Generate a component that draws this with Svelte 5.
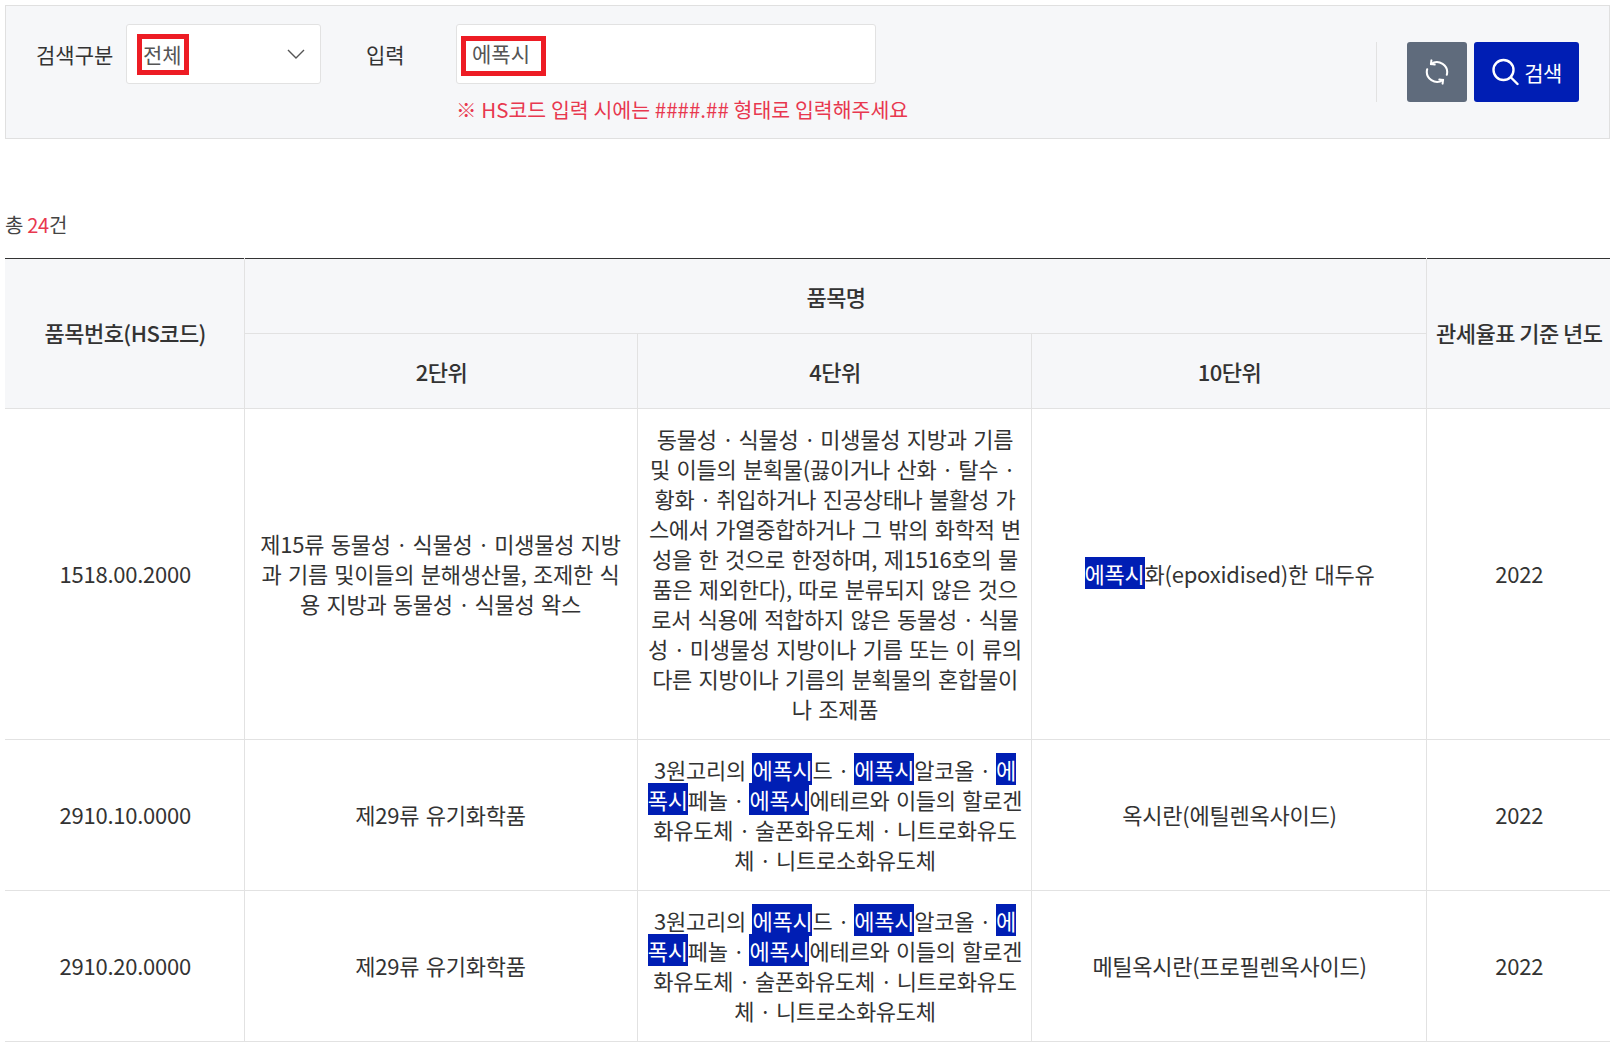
<script>
  const kw = '에폭시';
  const desc29 = [
    '3원고리의 ', { k: kw }, '드ㆍ', { k: kw }, '알코올ㆍ', { k: kw }, '페놀ㆍ', { k: kw },
    '에테르와 이들의 할로겐화유도체ㆍ술폰화유도체ㆍ니트로화유도체ㆍ니트로소화유도체'
  ];

  const rows = [
    {
      code: '1518.00.2000',
      two: ['제15류 동물성ㆍ식물성ㆍ미생물성 지방과 기름 및이들의 분해생산물, 조제한 식용 지방과 동물성ㆍ식물성 왁스'],
      four: ['동물성ㆍ식물성ㆍ미생물성 지방과 기름 및 이들의 분획물(끓이거나 산화ㆍ탈수ㆍ황화ㆍ취입하거나 진공상태나 불활성 가스에서 가열중합하거나 그 밖의 화학적 변성을 한 것으로 한정하며, 제1516호의 물품은 제외한다), 따로 분류되지 않은 것으로서 식용에 적합하지 않은 동물성ㆍ식물성ㆍ미생물성 지방이나 기름 또는 이 류의 다른 지방이나 기름의 분획물의 혼합물이나 조제품'],
      ten: [{ k: kw }, '화(epoxidised)한 대두유']
    },
    { code: '2910.10.0000', two: ['제29류 유기화학품'], four: desc29, ten: ['옥시란(에틸렌옥사이드)'] },
    { code: '2910.20.0000', two: ['제29류 유기화학품'], four: desc29, ten: ['메틸옥시란(프로필렌옥사이드)'] }
  ];
</script>

{#snippet rich(parts)}
  {#each parts as p}{#if typeof p === 'string'}{#each p.split('ㆍ') as seg, i}{#if i}<span class="dot">ㆍ</span>{/if}{seg}{/each}{:else}<span class="hit">{p.k}</span>{/if}{/each}
{/snippet}

<div class="page">
  <div class="search">
    <span class="lbl lbl-type">검색구분</span>
    <div class="field select">
      <span class="mark mark-sel">전체</span>
      <svg class="chev" width="20" height="12" viewBox="0 0 20 12"><path d="M2 2l8 8 8-8" fill="none" stroke="#555" stroke-width="1.4"/></svg>
    </div>
    <span class="lbl lbl-input">입력</span>
    <div class="input-wrap">
      <div class="field text">
        <span class="mark mark-inp">에폭시</span>
      </div>
      <p class="hint">※ HS코드 입력 시에는 ####.## 형태로 입력해주세요</p>
    </div>
    <div class="actions">
      <button class="btn reset" aria-label="초기화">
        <svg width="26" height="26" viewBox="0 0 28 28" fill="none" stroke="#fff" stroke-width="2.2" stroke-linecap="round" stroke-linejoin="round">
          <path d="M7.5 5.5A11 11 0 0 1 24.6 17"/>
          <path d="M20.5 22.5A11 11 0 0 1 3.4 11"/>
          <path d="M8 1.5l-.5 4 4 .5"/>
          <path d="M20 26.5l.5-4-4-.5"/>
        </svg>
      </button>
      <button class="btn go">
        <svg width="28" height="28" viewBox="0 0 28 28" fill="none" stroke="#fff" stroke-width="2.4" stroke-linecap="round">
          <circle cx="12.5" cy="12" r="10"/>
          <path d="M20 19.5l6.5 6.5"/>
        </svg>
        검색
      </button>
    </div>
  </div>

  <p class="total">총 <b>24</b>건</p>

  <table>
    <colgroup>
      <col style="width:239px" />
      <col style="width:393px" />
      <col style="width:394px" />
      <col style="width:395px" />
      <col />
    </colgroup>
    <thead>
      <tr>
        <th rowspan="2" class="span">품목번호(HS코드)</th>
        <th colspan="3">품목명</th>
        <th rowspan="2" class="span">관세율표 기준 년도</th>
      </tr>
      <tr>
        <th>2단위</th>
        <th>4단위</th>
        <th>10단위</th>
      </tr>
    </thead>
    <tbody>
      {#each rows as r}
        <tr>
          <td>{r.code}</td>
          <td class="two">{@render rich(r.two)}</td>
          <td>{@render rich(r.four)}</td>
          <td>{@render rich(r.ten)}</td>
          <td>2022</td>
        </tr>
      {/each}
    </tbody>
  </table>
</div>

<style>
  :global(body) {
    margin: 0;
    background: #fff;
    overflow: hidden;
  }
  .page {
    height: 1044px;
    overflow: hidden;
    padding: 5px 8px 0 5px;
    box-sizing: border-box;
    font-family: "Noto Sans CJK KR", "Noto Sans", sans-serif;
    font-size: 22px;
    line-height: 30px;
    color: #333;
  }
  .search {
    display: flex;
    align-items: flex-start;
    height: 134px;
    box-sizing: border-box;
    padding-top: 18px;
    background: #f6f7f9;
    border: 1px solid #e0e0e0;
  }
  .lbl { line-height: 60px; font-size: 21px; }
  .lbl-type { margin-left: 30px; width: 90px; }
  .lbl-input { margin-left: 45px; width: 90px; }
  .field {
    height: 60px;
    box-sizing: border-box;
    background: #fff;
    border: 1px solid #e2e2e2;
    border-radius: 3px;
    display: flex;
    align-items: center;
  }
  .select {
    width: 195px;
    padding: 0 14px 0 10px;
    justify-content: space-between;
  }
  .text { width: 420px; padding-left: 4px; }
  .mark {
    border: 5px solid #ed1c24;
    box-sizing: border-box;
    height: 41px;
    line-height: 30px;
    font-size: 21px;
    color: #555;
  }
  .mark-sel { padding: 0 2px 0 1px; }
  .mark-inp { padding: 0 11px 0 6px; height: 40px; margin-top: 3px; line-height: 24px; }
  .hint {
    margin: 10px 0 0 0;
    font-size: 20.5px;
    line-height: 30px;
    word-spacing: 0.2px;
    color: #e8384f;
  }
  .actions {
    margin-left: auto;
    margin-right: 30px;
    margin-top: 18px;
    padding-left: 30px;
    display: flex;
    gap: 7px;
    border-left: 1px solid #e2e2e2;
  }
  .btn {
    height: 60px;
    border: 0;
    border-radius: 3px;
    color: #fff;
    font: inherit;
    display: flex;
    align-items: center;
    justify-content: center;
    padding: 0;
  }
  .reset { width: 60px; background: #5f6b7c; }
  .go { width: 105px; gap: 5px; background: #001eb4; font-size: 21px; letter-spacing: -0.5px; }
  .total {
    margin: 68px 0 15px;
    font-size: 20px;
    line-height: 36px;
    letter-spacing: -0.3px;
    color: #444;
  }
  .total b { font-weight: 400; color: #e8384f; }
  table {
    width: 100%;
    table-layout: fixed;
    border-collapse: collapse;
    border-top: 1px solid #333;
    text-align: center;
  }
  th {
    background: #f6f7f9;
    font-weight: 500;
    height: 74px;
    padding: 0 0 0 2px;
    border: 1px solid #e2e2e2;
    border-top: 0;
    letter-spacing: -0.55px;
  }
  th.span { padding-bottom: 3px; }
  td {
    padding: 14px 7px 16px 9px;
    border: 1px solid #e2e2e2;
    word-break: break-all;
    word-spacing: 1.8px;
    letter-spacing: -0.25px;
  }
  td.two { padding-left: 7px; padding-right: 7px; }
  th:first-child, td:first-child { border-left: 0; }
  th:last-child, td:last-child { border-right: 0; }
  .hit { background: #001eb4; color: #fff; }
  .dot { padding-left: 0.9px; letter-spacing: 0.65px; }
</style>
